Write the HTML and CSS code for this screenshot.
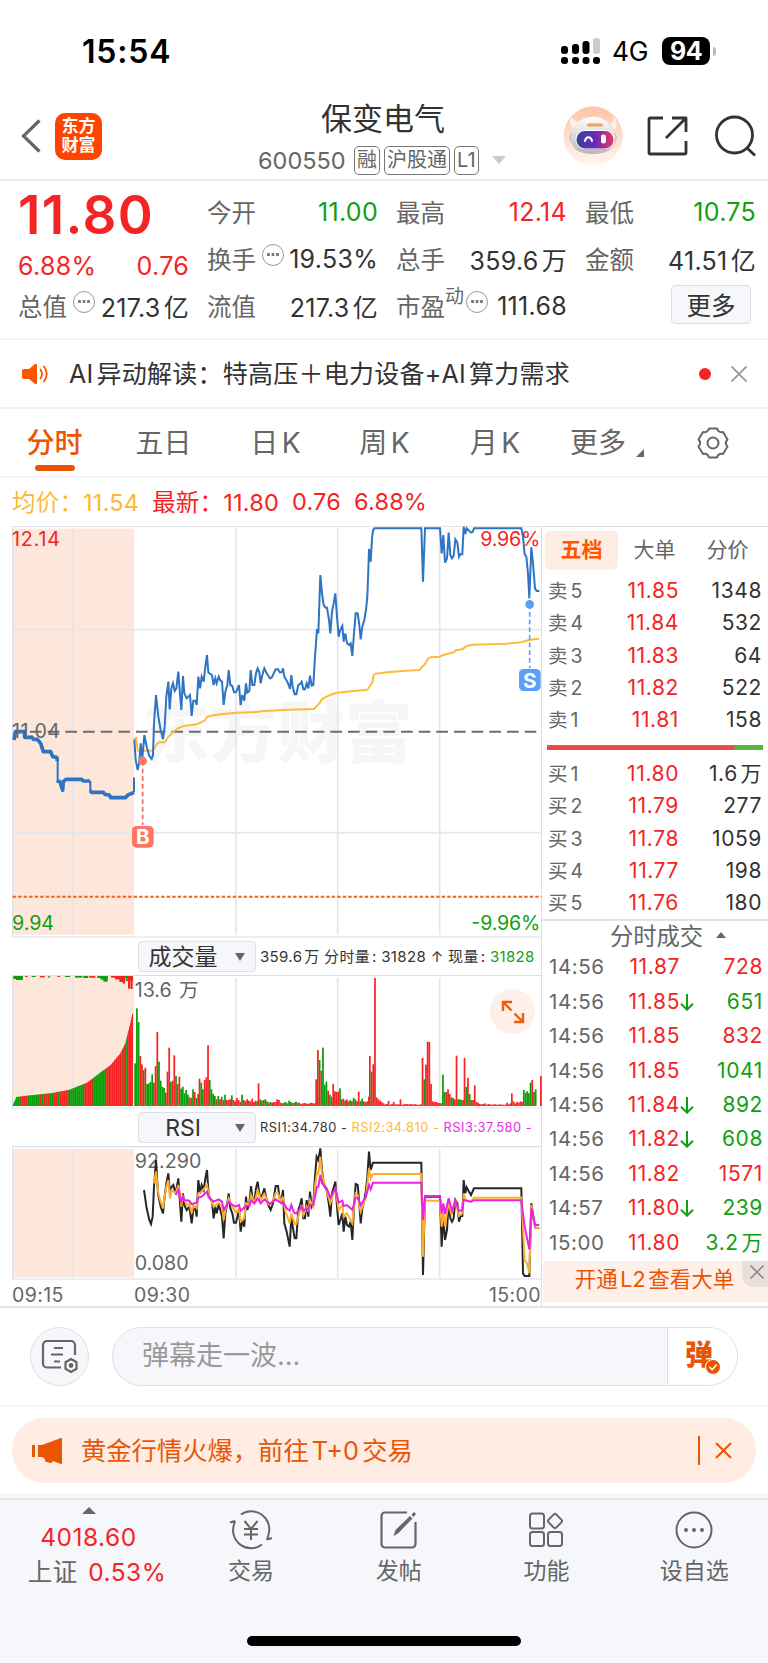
FILE: index.html
```html
<!DOCTYPE html>
<html lang="zh-CN">
  <head>
    <meta charset="UTF-8" />
    <title>保变电气 600550</title>
    <link rel="stylesheet" href="styles.css">
  </head>
  <body>
    <div class="status-bar">
      <span class="clock">15:54</span>
      <div class="status-icons">
        <svg class="signal" width="40" height="28" viewBox="0 0 40 28">
          <g fill="#000">
            <rect x="0" y="9" width="7" height="8" rx="3" />
            <rect x="11" y="7" width="7" height="10" rx="3" />
            <rect x="21.500" y="4" width="7" height="13" rx="3" />
            <rect x="0" y="20" width="7" height="7" rx="3" />
            <rect x="11" y="20" width="7" height="7" rx="3" />
            <rect x="21.500" y="20" width="7" height="7" rx="3" />
            <rect x="32" y="20" width="7" height="7" rx="3" />
          </g>
          <rect x="32" y="1" width="7" height="16" rx="3" fill="#ccc" />
        </svg>
        <span class="network">4G</span>
        <span class="battery">94</span>
        <span class="battery-cap"></span>
      </div>
    </div>

    <div class="header">
      <div class="header-left">
        <svg width="20" height="34" viewBox="0 0 20 34" fill="none" stroke="#666" stroke-width="3.200">
          <path d="M18.500 1.500 2.500 17l16 15.500" />
        </svg>
        <div class="logo">东方<br />财富</div>
      </div>
      <div class="header-title">
        <div class="name">保变电气</div>
        <div class="code-row">
          <span class="code">600550</span>
          <span class="tag">融</span>
          <span class="tag">沪股通</span>
          <span class="tag">L1</span>
          <span class="arrow-down"></span>
        </div>
      </div>
      <div class="header-right">
        <svg class="robot" width="60" height="60" viewBox="0 0 60 60">
          <defs>
            <linearGradient id="halo" x1="0" y1="0" x2="0" y2="1">
              <stop offset="0" stop-color="#ffc4a8" />
              <stop offset="1" stop-color="#fff6f1" />
            </linearGradient>
            <linearGradient id="visor" x1="0" y1="0" x2="1" y2="0">
              <stop offset="0" stop-color="#34429c" />
              <stop offset="0.500" stop-color="#6a2bb4" />
              <stop offset="1" stop-color="#e8385f" />
            </linearGradient>
            <linearGradient id="shell" x1="0" y1="0" x2="0" y2="1">
              <stop offset="0" stop-color="#fff" />
              <stop offset="1" stop-color="#bdb5b8" />
            </linearGradient>
          </defs>
          <circle cx="30" cy="30" r="29.500" fill="url(#halo)" />
          <path d="M10 22c-4-4-4-8-1-11 1 3 3 4 7 5zM47 17c4-1 4-4 3-7 4 4 5 9 2 14z" fill="#fbf3f1" />
          <rect x="6" y="25" width="48" height="14" rx="7" fill="#cfc7ca" />
          <path d="M30 11c13 0 20 8 22 20 1 12-9 17-22 17S7 43 8 31c2-12 9-20 22-20z" fill="url(#shell)" />
          <rect x="24" y="17.500" width="16" height="3" rx="1.500" fill="#f0a060" />
          <rect x="12.500" y="24" width="39" height="19" rx="9" fill="#fff" />
          <rect x="13.500" y="25" width="37" height="17.500" rx="8.500" fill="url(#visor)" />
          <path d="M22 35c1-5 6-5 7 0" fill="none" stroke="#fff" stroke-width="2" stroke-linecap="round" />
          <rect x="38" y="28.500" width="5" height="9" rx="2.200" fill="#fff" />
        </svg>
        <svg class="share" width="42" height="42" viewBox="0 0 42 42" fill="none" stroke="#333" stroke-width="2.800" stroke-linejoin="round">
          <path d="M16 3H3.500a1.500 1.500 0 0 0-1.500 1.500v33A1.500 1.500 0 0 0 3.500 39h34a1.500 1.500 0 0 0 1.500-1.500V26M25 3h14v14M39 3 19 23" />
        </svg>
        <svg class="search" width="42" height="42" viewBox="0 0 42 42" fill="none" stroke="#333" stroke-width="2.800">
          <circle cx="19.500" cy="20" r="18" />
          <path d="M32 33l8 7.500" />
        </svg>
      </div>
    </div>

    <div class="quote">
      <div class="quote-col first">
        <div class="price">11.80</div>
        <div class="cell change red"><span>6.88%</span><span>0.76</span></div>
        <div class="cell"><label>总值<i class="tip"></i></label><span>217.3亿</span></div>
      </div>
      <div class="quote-col">
        <div class="cell"><label>今开</label><span class="green">11.00</span></div>
        <div class="cell"><label>换手<i class="tip"></i></label><span>19.53%</span></div>
        <div class="cell"><label>流值</label><span>217.3亿</span></div>
      </div>
      <div class="quote-col">
        <div class="cell"><label>最高</label><span class="red">12.14</span></div>
        <div class="cell"><label>总手</label><span>359.6万</span></div>
        <div class="cell"><label>市盈<sup>动</sup><i class="tip pe"></i></label><span>111.68</span></div>
      </div>
      <div class="quote-col">
        <div class="cell"><label>最低</label><span class="green">10.75</span></div>
        <div class="cell"><label>金额</label><span>41.51亿</span></div>
        <div class="cell end"><button class="more">更多</button></div>
      </div>
    </div>

    <div class="ai-bar">
      <svg width="27" height="22" viewBox="0 0 27 22">
        <path d="M2 6h5l6-5q2-1 2 1v18q0 2-2 1l-6-5H2q-2 0-2-2V8q0-2 2-2z" fill="#ff5500" />
        <path d="M18.500 6.500q3 4.500 0 9M22 3.500q5.500 7.500 0 15" fill="none" stroke="#ff5500" stroke-width="1.800" stroke-linecap="round" />
      </svg>
      <span class="ai-text">AI异动解读：特高压＋电力设备+AI算力需求</span>
      <span class="dot"></span>
      <svg width="16" height="16" viewBox="0 0 16 16" stroke="#999" stroke-width="1.800"><path d="M.5.500l15 15M15.500.500l-15 15" /></svg>
    </div>

    <div class="tabs">
      <span class="tab active">分时</span>
      <span class="tab">五日</span>
      <span class="tab">日K</span>
      <span class="tab">周K</span>
      <span class="tab">月K</span>
      <span class="tab tab-more">更多<i class="corner"></i></span>
      <svg class="gear" width="32" height="32" viewBox="0 0 32 32" fill="none" stroke="#666" stroke-width="2">
        <path d="M12 1.500h8q1.500 4.500 6 3.500l4.500 7.500q-3.500 3.500 0 7L26 27q-4.500-1-6 3.500h-8Q10.500 26 6 27l-4.500-7.500q3.500-3.500 0-7L6 5q4.500 1 6-3.500z" stroke-linejoin="round" />
        <circle cx="16" cy="16" r="5.500" />
      </svg>
    </div>

    <div class="legend">
      <span class="avg">均价：<b>11.54</b></span>
      <span class="red">最新：<b>11.80</b></span>
      <span class="red">0.76</span>
      <span class="red">6.88%</span>
    </div>

    <div class="market">
      <div class="charts">
        <svg class="main-chart" viewBox="36 48 1590 1236" width="530" height="412">
          <rect x="38" y="56" width="364" height="1218" fill="#fde6da" />
          <text class="watermark" x="428" y="741" textLength="808">东方财富</text>
          <g stroke="#e4e6ec" stroke-width="5">
            <path d="M219 55V1274M708 55V1274M1013 55V1274M1319 55V1274M38 359H1624M38 968H1624" />
          </g>
          <path d="M36 49H1626M36 1281H1626M37.500 48V1284M1624.500 48V1284" stroke="#dcdee5" stroke-width="3" />
          <path d="M90 665H1616" stroke="#6c6c6c" stroke-width="6" stroke-dasharray="35 18" />
          <path d="M38 1160H1624" stroke="#f0641e" stroke-width="6" stroke-dasharray="10.500 6" />
          <g fill="none" stroke="#fdbb3d" stroke-width="6" stroke-linejoin="round">
            <polyline points="403,688 408,683 413,722 457,722 465,712 472,700 478,697 494,697 503,683 512,674 520,665 535,654 555,647 590,643 605,636 615,630 622,620 640,616 670,612 710,608 770,606 790,603 870,599" />
            <polyline transform="translate(840 0)" points="30,599 102,597 118,580 126,568 135,562 158,552 172,548 200,545 262,539 270,528 277,518 281,495 286,491 320,487 380,482 419,480 425,472 433,465 445,445 452,442 480,440 487,436 522,427 527,421 547,418 560,408 580,404 680,401 724,397 745,391 765,387 778,386" />
          </g>
          <g fill="none" stroke="#2f74c4" stroke-width="6">
            <polyline points="403,688 407,750 413,780 418,755 422,700 427,745 433,675 440,710 448,738 455,747 459,735 462,640 468,555 475,620 482,660 489,688 494,650 499,560 505,515 509,598 514,535 519,520 524,543 529,535 535,485 539,540 544,600 549,498 553,550 560,565 565,560 570,555 575,618 580,572 586,572 590,585 595,500 600,535 605,500 611,515 616,470 621,435 625,487 631,492 636,495 641,525 646,505 650,520 656,500 661,512 666,515 671,585 676,545 682,525 686,480 691,525 697,528 702,547 708,547 713,535 717,525 722,585 727,555 733,572 738,520 742,548 748,543 752,480 757,525 763,525 768,490 773,475 778,487 782,520 787,495 793,475 800,490 810,505 815,503 827,478 834,478 839,487 845,487 849,475" />
            <polyline transform="translate(840 0)" points="9,475 13,500 20,512 24,520 30,537 34,495 38,530 44,553 49,553 55,525 60,522 65,515 70,538 75,538 80,520 85,535 90,497 95,527 100,525 105,440 111,357 115,370 121,195 126,250 131,285 137,293 141,293 147,330 151,370 156,305 161,280 166,250 171,320 176,380 181,360 187,348 191,395 196,370 201,400 207,405 212,400 217,438 222,370 227,310 233,310 238,345 242,388 247,350 253,330 258,300 262,260 265,180 267,117 272,155 276,85 279,62 283,55 424,55 429,215 435,55 480,55 485,130 490,75 495,158 501,145 506,68 511,135 516,145 521,138 526,88 532,98 537,140 541,133 547,133 551,50 556,72 560,55 567,62 573,67 578,66 582,55 724,55 729,80 734,133 739,140 744,190 748,265 754,112 759,160 765,235 770,243 778,243" />
            <path d="M173 742V815M271 813V845M402 847V806" />
            <path d="M42 690 46 665H74V682H96L100 688H112L122 700 130 725H152L158 740 170 742 172 753M170 813 180 815 188 841 190 815 198 808H245L250 813H270M270 842 275 847H310L315 853 328 855 332 863H376L384 855 402 847M399 808h6" stroke-width="11" stroke-linejoin="round" />
          </g>
          <g class="point buy">
            <path d="M428 753V945" />
            <circle cx="428" cy="753" r="13" />
            <rect x="396" y="948" width="65" height="65" rx="14" />
            <text x="428.500" y="1003">B</text>
          </g>
          <g class="point sell">
            <path d="M1589 283V475" />
            <circle cx="1589" cy="283" r="13" />
            <rect x="1557" y="477" width="65" height="66" rx="14" />
            <text x="1589.500" y="533">S</text>
          </g>
          <g class="scale">
            <text x="36" y="108" fill="#f52424" textLength="144">12.14</text>
            <text x="36" y="685" fill="#666" textLength="144">11.04</text>
            <text x="36" y="1259" fill="#11a011" textLength="126">9.94</text>
            <text x="1441" y="108" fill="#f52424" textLength="180">9.96%</text>
            <text x="1414" y="1259" fill="#11a011" textLength="207">-9.96%</text>
          </g>
        </svg>

        <div class="indicator">
          <div class="picker">成交量<i></i></div>
          <span class="info">359.6万 分时量: 31828 ↑ 现量: <em class="green">31828</em></span>
        </div>
        <div class="volume-wrap">
          <svg viewBox="36 135 1590 402" width="530" height="134">
            <rect x="38" y="138" width="364" height="390" fill="#fde6da" />
            <path d="M219 143V528M708 143V528M1013 143V528M1319 143V528" stroke="#e4e6ec" stroke-width="5" />
            <path d="M36 136.500H1626M36 534H1626M37.500 135V537M1624.500 135V537" stroke="#dcdee5" stroke-width="3" />
            <g id="volume"></g>
            <g class="scale"><text x="404" y="201" fill="#666">13.6万</text></g>
          </svg>
          <div class="expand">
            <svg width="24" height="24" viewBox="0 0 24 24" fill="none" stroke="#ea6010" stroke-width="2.400">
              <path d="M11 2H2v9M2 2l8.500 8.500M22 13v9h-9M22 22l-8.500-8.500" />
            </svg>
          </div>
        </div>

        <div class="indicator">
          <div class="picker">RSI<i></i></div>
          <span class="info rsi">RSI1:34.780 - <em class="avg">RSI2:34.810 - </em><em class="magenta">RSI3:37.580 -</em></span>
        </div>
        <svg class="rsi-chart" viewBox="36 648 1590 402" width="530" height="134">
          <rect x="38" y="657" width="364" height="385" fill="#fde6da" />
          <path d="M219 657V1042M708 657V1042M1013 657V1042M1319 657V1042" stroke="#e4e6ec" stroke-width="5" />
          <path d="M36 650H1626M36 1047H1626M37.500 648V1050M1624.500 648V1050" stroke="#dcdee5" stroke-width="3.500" />
          <g class="scale">
            <text x="404" y="713" fill="#666" textLength="200">92.290</text>
            <text x="404" y="1021" fill="#666" textLength="162">0.080</text>
          </g>
          <g fill="none" stroke="#262626" stroke-width="6">
            <polyline points="432,780 440,835 448,870 453,882 458,860 462,770 468,690 474,790 482,830 489,850 494,800 499,760 505,730 510,790 515,770 520,765 527,790 535,745 540,820 544,875 549,790 553,825 560,840 568,830 575,880 580,838 586,835 590,860 595,750 600,790 605,765 611,780 616,745 621,720 626,795 632,808 636,815 641,865 646,830 650,850 656,825 661,840 666,860 671,925 676,850 682,820 686,790 691,835 697,850 702,878 708,878 717,840 722,905 727,870 733,890 738,800 742,840 748,820 753,768 758,810 763,815 768,775 773,755 778,790 782,810 793,775 798,800 806,828 812,840 819,820 827,768 834,768 839,805 845,810 849,780" />
            <polyline transform="translate(840 0)" points="9,780 13,880 20,905 29,950 34,860 39,895 44,925 49,925 55,840 60,825 65,805 70,865 75,865 80,810 85,860 90,785 95,830 100,820 105,740 110,680 115,690 121,655 126,720 131,765 137,775 141,785 147,825 151,860 156,790 166,755 171,830 176,885 181,870 187,850 191,905 196,860 201,885 207,890 212,875 217,930 222,830 227,762 233,765 238,820 242,880 247,835 253,810 258,780 262,740 267,665 272,720 279,698 424,698 429,1035 435,800 480,800 485,950 490,860 495,930 501,900 506,815 511,865 516,875 521,865 526,810 532,820 537,875 541,860 547,858 551,750 556,790 560,772 567,785 573,795 582,775 724,775 729,1030 734,1038 748,1038 754,820 760,860 766,893 778,895" />
          </g>
          <g fill="none" stroke="#fbae2c" stroke-width="6">
            <polyline points="462,760 468,725 475,790 482,815 489,835 494,800 499,770 505,750 510,805 515,780 527,790 535,765 541,800 544,830 549,800 560,825 568,820 575,850 580,825 590,835 595,790 605,785 621,765 626,795 641,830 656,818 666,830 671,870 676,840 686,805 697,830 708,848 717,835 722,875 733,865 738,820 748,825 753,795 763,820 773,780 782,810 793,792 806,822 819,815 827,790 834,790 842,815 849,800" />
            <polyline transform="translate(840 0)" points="9,800 15,840 29,880 34,850 44,882 49,882 60,840 65,825 70,855 80,830 85,845 90,810 100,830 105,770 111,725 115,730 121,680 126,735 135,765 151,820 166,775 176,840 187,825 191,860 201,850 217,880 222,830 227,790 233,795 242,845 258,800 267,715 272,745 279,732 424,732 429,980 435,812 480,812 485,890 490,840 495,890 506,815 514,855 526,810 537,858 547,850 551,790 556,810 573,815 582,803 724,803 734,990 741,1000 748,1030 754,825 760,870 767,893 778,895" />
          </g>
          <g fill="none" stroke="#ea22e4" stroke-width="6">
            <polyline points="527,795 535,780 540,800 544,815 549,800 553,810 568,812 575,822 590,818 595,803 605,800 621,785 626,802 641,815 656,808 666,815 671,840 686,815 697,825 708,830 717,825 722,842 738,828 748,828 753,812 763,820 773,805 782,820 793,808 810,822 827,808 845,820 849,815" />
            <polyline transform="translate(840 0)" points="9,815 20,835 29,842 34,825 39,840 44,850 49,850 65,830 70,842 80,835 85,840 90,825 100,825 111,770 115,770 121,735 126,760 140,775 151,803 166,775 176,818 187,812 191,828 201,825 217,840 227,803 233,803 242,825 258,800 267,765 272,778 279,758 424,758 429,870 435,798 480,798 485,850 490,820 495,852 506,805 516,843 526,812 537,843 547,840 551,810 573,815 582,811 724,811 734,890 748,958 754,835 765,885 778,885" />
          </g>
        </svg>
        <div class="times">
          <span class="open">09:15</span><span>09:30</span><span class="close">15:00</span>
        </div>
      </div>

      <div class="side">
        <div class="side-tabs">
          <span class="on">五档</span><span>大单</span><span>分价</span>
        </div>
        <div class="level"><span>卖5</span><span class="red">11.85</span><span>1348</span></div>
        <div class="level"><span>卖4</span><span class="red">11.84</span><span>532</span></div>
        <div class="level"><span>卖3</span><span class="red">11.83</span><span>64</span></div>
        <div class="level"><span>卖2</span><span class="red">11.82</span><span>522</span></div>
        <div class="level"><span>卖1</span><span class="red">11.81</span><span>158</span></div>
        <div class="ratio"><i></i></div>
        <div class="level"><span>买1</span><span class="red">11.80</span><span>1.6万</span></div>
        <div class="level"><span>买2</span><span class="red">11.79</span><span>277</span></div>
        <div class="level"><span>买3</span><span class="red">11.78</span><span>1059</span></div>
        <div class="level"><span>买4</span><span class="red">11.77</span><span>198</span></div>
        <div class="level"><span>买5</span><span class="red">11.76</span><span>180</span></div>
        <div class="deal-title">分时成交<i></i></div>
        <div id="deals"></div>
        <div class="l2">开通L2查看大单
          <div class="l2-close">
            <svg width="14" height="14" viewBox="0 0 14 14" stroke="#8d8583" stroke-width="1.500"><path d="M.5.500l13 13M13.500.500l-13 13" /></svg>
          </div>
        </div>
      </div>
    </div>

    <div class="chat">
      <div class="chat-set">
        <svg width="38" height="36" viewBox="0 0 38 36" fill="none" stroke="#666" stroke-width="2.200">
          <path d="M20 28.500H6a4 4 0 0 1-4-4V6a4 4 0 0 1 4-4h24a4 4 0 0 1 4 4v10M13 9h9M10 15.500h12M13 22.500h6" />
          <path d="M30 20l5.500 3.200v6.600L30 33l-5.500-3.200v-6.600z" />
          <circle cx="30" cy="26.500" r="1.300" fill="#666" />
        </svg>
      </div>
      <div class="chat-input">
        <span>弹幕走一波...</span>
        <div class="danmu">弹
          <svg width="16" height="16" viewBox="0 0 16 16"><circle cx="8" cy="8" r="7.500" fill="#ea5504" stroke="#fff" /><path d="M4.500 8l2.700 2.700L11.700 5.500" fill="none" stroke="#fff" stroke-width="1.600" /></svg>
        </div>
      </div>
    </div>

    <div class="promo-wrap">
      <div class="promo">
        <svg width="31" height="28" viewBox="0 0 31 28" fill="#ea5504">
          <path d="M0 8h3v12H0zM6 8h4L29 1q1-.5 1 .5v25q0 1-1 .5l-8-3q-1 3-4 1.500l-4-1v-2.500L10 20H6z" />
        </svg>
        <span>黄金行情火爆，前往T+0交易</span>
        <i class="sep"></i>
        <svg width="17" height="17" viewBox="0 0 17 17" stroke="#ea5504" stroke-width="2"><path d="M1 1l15 15M16 1 1 16" /></svg>
      </div>
    </div>

    <div class="nav">
      <div class="nav-index">
        <i class="arrow-up"></i>
        <span class="red">4018.60</span>
        <span class="index-name">上证 <em class="red">0.53%</em></span>
      </div>
      <div class="nav-item">
        <svg width="44" height="40" viewBox="0 0 44 40" fill="none" stroke="#666" stroke-width="2">
          <path d="M12 4.500A18 18 0 0 1 39.500 24.500L38 30M33 34.500A18 18 0 0 1 5 14.500L6 11M1 12.500l5-1.500M38 29.500l5-1.500M15.500 11l6.500 8 6.500-8M15 19h14M15 24.500h14M22 19v11" />
        </svg>
        <span>交易</span>
      </div>
      <div class="nav-item">
        <svg width="44" height="40" viewBox="0 0 44 40" fill="none" stroke="#666" stroke-width="2.200">
          <path d="M30 2.500H8a3.500 3.500 0 0 0-3.500 3.500v28A3.500 3.500 0 0 0 8 37.500h27a3.500 3.500 0 0 0 3.500-3.500V12" />
          <path d="M16.500 26l2-6L33 6l2.500 2.500L21 23.500zM34.500 4.500l2.500-2.500 2 2-2.500 3z" fill="#666" stroke="none" />
        </svg>
        <span>发帖</span>
      </div>
      <div class="nav-item">
        <svg width="44" height="40" viewBox="0 0 44 40" fill="none" stroke="#666" stroke-width="2">
          <rect x="6" y="3.500" width="14" height="15" rx="2.500" />
          <rect x="6" y="22" width="14" height="14" rx="2.500" />
          <rect x="24" y="22" width="14" height="14" rx="2.500" />
          <rect x="25.500" y="5.500" width="11" height="11" rx="2" transform="rotate(45 31 11)" />
        </svg>
        <span>功能</span>
      </div>
      <div class="nav-item">
        <svg width="44" height="40" viewBox="0 0 44 40">
          <circle cx="22" cy="20" r="17.500" fill="none" stroke="#666" stroke-width="2" />
          <g fill="#666"><circle cx="14" cy="20" r="2" /><circle cx="22" cy="20" r="2" /><circle cx="30" cy="20" r="2" /></g>
        </svg>
        <span>设自选</span>
      </div>
      <div class="home-bar"></div>
    </div>

    <script src="script.js"></script>
  </body>
</html>
```
FILE: styles.css
```css
* {
  box-sizing: border-box;
}
body {
  margin: 0;
  width: 768px;
  background-color: #fff;
  color: #333;
  font-family: Inter, "Noto Sans CJK SC", sans-serif;
  text-autospace: normal;
}
svg {
  display: block;
  flex-shrink: 0;
}
i,
em {
  font-style: normal;
}
.red {
  color: #f52424;
}
.green {
  color: #11a011;
}
.avg {
  color: #fdb933;
}
.magenta {
  color: #e62de6;
}

/* status bar */
.status-bar {
  display: flex;
  justify-content: space-between;
  align-items: center;
  height: 102px;
  padding: 0 52px 0 82px;
}
.clock {
  font-size: 32px;
  font-weight: 600;
  letter-spacing: 0.8px;
  color: #000;
}
.status-icons {
  display: flex;
  align-items: center;
}
.network {
  width: 50px;
  margin-left: 11px;
  font-size: 26.500px;
  letter-spacing: -0.3px;
  color: #000;
}
.battery {
  width: 48px;
  height: 28px;
  border-radius: 8px;
  background-color: #000;
  color: #fff;
  font-size: 25px;
  font-weight: 700;
  line-height: 28px;
  text-align: center;
  letter-spacing: -0.5px;
}
.battery-cap {
  width: 3px;
  height: 9px;
  margin-left: 3px;
  border-radius: 0 4px 4px 0;
  background-color: #bbb;
}

/* header */
.header {
  display: grid;
  grid-template-columns: 258px 1fr 210px;
  height: 79px;
  border-bottom: 2px solid #e8e8e8;
}
.header-left {
  display: flex;
  align-items: center;
  gap: 14px;
  height: 68px;
  padding-left: 21px;
}
.logo {
  width: 47px;
  height: 47px;
  padding-top: 4px;
  border-radius: 10px;
  background-color: #ff4400;
  color: #fff;
  font-size: 17px;
  font-weight: 700;
  line-height: 19px;
  text-align: center;
}
.name {
  height: 38px;
  padding-left: 63px;
  font-size: 31px;
  line-height: 34px;
}
.code-row {
  display: flex;
  align-items: center;
  height: 40px;
}
.code {
  width: 96px;
  font-size: 23.5px;
  color: #666;
}
.tag {
  height: 29px;
  margin-right: 4px;
  padding: 0 2px;
  border: 1.500px solid #777;
  border-radius: 5px;
  font-size: 20px;
  line-height: 26px;
  color: #666;
}
.arrow-down {
  margin-left: 9px;
  border: 7px solid transparent;
  border-top: 8px solid #ccc;
  border-bottom: 0;
}
.header-right {
  display: flex;
  align-items: center;
  height: 68px;
  padding-left: 5px;
}
.share {
  margin-left: 24px;
}
.search {
  margin-left: 26px;
}

/* quote */
.quote {
  display: grid;
  grid-template-columns: repeat(4, 170px);
  column-gap: 19px;
  height: 159px;
  padding: 7px 0 0 18px;
  border-bottom: 2px solid #f3f3f5;
}
.cell {
  display: flex;
  justify-content: space-between;
  align-items: center;
  height: 47px;
  font-size: 25px;
  white-space: nowrap;
}
.cell span {
  margin-right: -1px;
  letter-spacing: 0.3px;
}
.cell label {
  display: flex;
  align-items: center;
  font-size: 24.5px;
  color: #666;
}
.cell.end {
  justify-content: flex-end;
  padding-right: 4px;
}
.price {
  height: 56px;
  font-size: 53px;
  font-weight: 600;
  line-height: 55px;
  letter-spacing: 1.4px;
  color: #f52424;
}
.cell.change {
  height: 38px;
  padding-top: 5px;
}
.tip {
  position: relative;
  top: -4px;
  width: 22px;
  height: 22px;
  margin-left: 6px;
  border: 1.500px solid #999;
  border-radius: 50%;
  background: radial-gradient(circle, #777 1.300px, transparent 1.800px) center / 4.500px 4.500px repeat-x content-box;
  padding: 0 3px;
}
.tip.pe {
  margin-left: 2px;
}
.cell sup {
  align-self: flex-start;
  margin-top: -3px;
  font-size: 19px;
  line-height: 24px;
  vertical-align: baseline;
}
.more {
  width: 80px;
  height: 39px;
  margin-top: -2px;
  padding: 0;
  border: 1.500px solid #dddfe6;
  border-radius: 4px;
  background-color: #f6f7fa;
  color: #333;
  font-family: inherit;
  font-size: 24.500px;
}

/* ai bar */
.ai-bar {
  display: flex;
  align-items: center;
  height: 69px;
  padding: 0 21px 0 22px;
  border-bottom: 2px solid #f3f3f5;
}
.ai-text {
  flex: 1;
  margin-left: 20px;
  padding-bottom: 4px;
  font-size: 25px;
  letter-spacing: 0.24px;
}
.dot {
  width: 12px;
  height: 12px;
  margin-right: 20px;
  border-radius: 50%;
  background-color: #f52424;
}

/* tabs */
.tabs {
  display: grid;
  grid-template-columns: 109px 109px 115px 103px 118px 105px 1fr;
  align-items: center;
  height: 69px;
  border-bottom: 2px solid #f3f3f5;
}
.tab {
  position: relative;
  font-size: 28px;
  line-height: 66px;
  text-align: center;
  color: #666;
}
.tab.active {
  color: #ea5504;
  font-weight: 500;
}
.tab.active::after {
  content: "";
  position: absolute;
  left: 35px;
  bottom: 5px;
  width: 40px;
  height: 6px;
  border-radius: 3px;
  background-color: #ea5504;
}
.tab-more {
  text-align: right;
  padding-right: 33px;
}
.corner {
  position: absolute;
  right: 15px;
  bottom: 19px;
  border-left: 8px solid transparent;
  border-bottom: 8px solid #666;
}
.gear {
  margin-left: 38px;
}

.legend {
  display: flex;
  align-items: center;
  gap: 13px;
  height: 48px;
  padding: 0 0 2px 12px;
  font-size: 23.500px;
  letter-spacing: 0.2px;
}
.legend b {
  font-weight: 400;
}

/* charts */
.market {
  display: flex;
  height: 782px;
  border-bottom: 2px solid #e3e3e8;
}
.charts {
  width: 542px;
  padding-left: 12px;
  border-right: 1px solid #dcdee5;
}
.watermark {
  fill: #f6f6f6;
  font-size: 200px;
  font-weight: 900;
}
.scale text {
  font-size: 59px;
}
.point text {
  fill: #fff;
  font-size: 62px;
  font-weight: 700;
  text-anchor: middle;
}
.point path {
  stroke-width: 5;
  stroke-dasharray: 14 9;
}
.buy {
  fill: #ff7563;
  stroke: none;
}
.buy path {
  stroke: #f26a5b;
}
.sell {
  fill: #5c9ffa;
}
.sell path {
  stroke: #5c9ffa;
}
.indicator {
  display: flex;
  align-items: center;
  height: 37px;
  padding-left: 126px;
}
.picker {
  display: flex;
  align-items: center;
  justify-content: center;
  position: relative;
  flex-shrink: 0;
  width: 118px;
  height: 31px;
  padding-right: 28px;
  border: 1px solid #dddfe6;
  border-radius: 4px;
  background-color: #f6f7fa;
  font-size: 23px;
  line-height: 28px;
}
.picker i {
  position: absolute;
  right: 10px;
  top: 11px;
  border: 5px solid transparent;
  border-top: 8px solid #666;
  border-bottom: 0;
}
.info {
  margin-left: 4px;
  padding-bottom: 2px;
  font-size: 15px;
  white-space: pre;
  letter-spacing: 0.35px;
}
.info.rsi {
  padding-bottom: 0;
  font-size: 12.800px;
  letter-spacing: 0.52px;
}
.volume-wrap {
  position: relative;
}
.expand {
  position: absolute;
  right: 6px;
  top: 14px;
  display: flex;
  align-items: center;
  justify-content: center;
  width: 45px;
  height: 45px;
  border-radius: 50%;
  background-color: #fef0e9;
}
.times {
  display: flex;
  height: 27px;
  font-size: 19.500px;
  line-height: 30px;
  letter-spacing: 0.4px;
  color: #666;
}
.times .open {
  width: 122px;
}
.times .close {
  margin-left: auto;
}

/* order book */
.side {
  width: 226px;
  border-top: 1px solid #dcdee5;
  font-size: 21px;
}
.side-tabs {
  display: flex;
  height: 48px;
  padding: 4px 0 0 3px;
  color: #666;
}
.side-tabs span {
  width: 73px;
  height: 39px;
  border-radius: 5px;
  line-height: 38px;
  text-align: center;
}
.side-tabs .on {
  background-color: #ffece3;
  color: #ff5500;
  font-weight: 700;
}
.level {
  display: grid;
  grid-template-columns: 60px 71px 83px;
  height: 32.300px;
  padding-left: 6px;
  line-height: 32px;
  letter-spacing: 0.6px;
}
.level span {
  text-align: right;
}
.level span:first-child {
  text-align: left;
  font-size: 19.500px;
  color: #666;
}
.ratio {
  width: 216px;
  height: 5px;
  margin: 9px 0 7.500px 5px;
  background-color: #55b63c;
}
.ratio i {
  display: block;
  width: 189px;
  height: 5px;
  background-color: #ee4748;
  clip-path: polygon(0 0, 100% 0, 98% 100%, 0 100%);
}
.deal-title {
  display: flex;
  align-items: center;
  justify-content: center;
  height: 31px;
  border-top: 2px solid #e3e4ea;
  padding: 0 16px 2px 42px;
  font-size: 23.300px;
  color: #666;
}
.deal-title i {
  margin-left: 13px;
  border: 5.500px solid transparent;
  border-bottom: 6px solid #666;
  border-top: 0;
}
.deal {
  display: grid;
  grid-template-columns: 62px 69px 14px 69px;
  height: 34.400px;
  padding-left: 7px;
  line-height: 34px;
  letter-spacing: 0.6px;
}
.deal span {
  text-align: right;
}
.deal .time {
  text-align: left;
  font-size: 20.500px;
  color: #666;
}
.deal svg {
  margin: 9px 0 0 0;
}
.l2 {
  position: relative;
  height: 41px;
  margin: 1px 0 0 1px;
  padding-right: 2px;
  background-color: #feefe9;
  color: #ea5504;
  font-size: 21.500px;
  line-height: 37px;
  text-align: center;
}
.l2-close {
  position: absolute;
  right: 0;
  top: 0;
  width: 26px;
  height: 26px;
  padding: 4px 0 0 8px;
  border-bottom-left-radius: 12px;
  background-color: #e9dfdb;
}

/* chat */
.chat {
  display: flex;
  align-items: center;
  gap: 23px;
  height: 99px;
  padding-left: 30px;
  border-bottom: 2px solid #f5f5f7;
}
.chat-set {
  display: flex;
  align-items: center;
  justify-content: center;
  width: 59px;
  height: 59px;
  border: 1.500px solid #dedfe5;
  border-radius: 50%;
  background-color: #f6f7fa;
}
.chat-input {
  display: flex;
  width: 626px;
  height: 59px;
  border: 1.500px solid #dedfe5;
  border-radius: 30px;
  background-color: #f6f7fa;
  overflow: hidden;
  font-size: 27px;
  line-height: 55px;
  color: #999;
  text-autospace: no-autospace;
}
.chat-input span {
  flex: 1;
  padding-left: 29px;
}
.danmu {
  position: relative;
  width: 70px;
  padding-left: 17px;
  border-left: 1.500px solid #dedfe5;
  background-color: #fff;
  color: #ea5504;
  font-size: 28px;
  font-weight: 900;
  line-height: 54px;
}
.danmu svg {
  position: absolute;
  left: 37px;
  top: 31px;
}

/* promo */
.promo-wrap {
  height: 91px;
  padding: 11px 12px;
  border-bottom: 5px solid #f6f7fa;
}
.promo {
  display: flex;
  align-items: center;
  height: 65px;
  padding: 0 24px 0 20px;
  border-radius: 32px;
  background-color: #ffede4;
  color: #ea5504;
  font-size: 25.300px;
}
.promo span {
  flex: 1;
  padding: 0 0 4px 18px;
}
.sep {
  width: 2px;
  height: 29px;
  margin-right: 15px;
  background-color: #ea5504;
}

/* bottom nav */
.nav {
  display: grid;
  grid-template-columns: 177px repeat(4, 1fr);
  grid-template-rows: 136px 10px;
  height: 165px;
  border-top: 2px solid #e3e3e5;
  background-color: #f6f7fa;
  color: #666;
}
.nav-index {
  display: flex;
  flex-direction: column;
  align-items: center;
  padding-top: 7px;
  font-size: 24.500px;
  line-height: 35px;
  letter-spacing: 0.5px;
  white-space: pre;
}
.nav-index > .red {
  padding-top: 6px;
}
.index-name {
  margin-left: 17px;
}
.index-name em {
  margin-left: 3px;
}
.arrow-up {
  border: 7px solid transparent;
  border-top: 0;
  border-bottom: 7px solid #666;
}
.nav-item {
  display: flex;
  flex-direction: column;
  align-items: center;
  padding-top: 10px;
  font-size: 23px;
  line-height: 43px;
}
.home-bar {
  grid-column: 1 / -1;
  justify-self: center;
  width: 274px;
  height: 10px;
  border-radius: 5px;
  background-color: #000;
}
```
FILE: script.js
```js
const RED = "#f82222";
const GREEN = "#0a9f0a";
const BASE = 528;
const STEP = 5.1;
const volume = document.querySelector("#volume");

function bar(x, y, w, h, color) {
  const rect = document.createElementNS("http://www.w3.org/2000/svg", "rect");
  rect.setAttribute("x", x);
  rect.setAttribute("y", y);
  rect.setAttribute("width", w);
  rect.setAttribute("height", h);
  rect.setAttribute("fill", color);
  volume.appendChild(rect);
}

// 集合竞价: [x, 高度]
const auction = [[38, 4], [48, 27], [90, 32], [150, 38], [205, 48], [260, 70], [305, 104], [330, 122], [360, 158], [375, 188], [388, 240], [398, 286]];
const runs = "gggggrrrrggggggggrgrrgrgggrrgrrrrrrggggggggggrrrrrggggggggrgrrrrrrrrrgrgrrrr";
for (let k = 0; k < auction.length - 1; k++) {
  const [x1, h1] = auction[k];
  const [x2, h2] = auction[k + 1];
  for (let x = x1; x < x2; x += 2) {
    const h = h1 + ((h2 - h1) * (x - x1)) / (x2 - x1);
    const c = runs[Math.floor(((x - 38) / 362) * runs.length)];
    bar(x, BASE - h, 3, h, c === "g" ? GREEN : RED);
  }
}

// 未匹配量, 自上而下
[
  [40, 28, 9, "g"], [48, 20, 12, "g"], [75, 8, 3, "r"], [95, 12, 3, "g"], [120, 14, 4, "r"], [145, 5, 5, "g"], [172, 8, 3, "r"],
  [195, 15, 3, "g"], [225, 22, 5, "g"], [250, 15, 6, "g"], [268, 18, 5, "r"], [292, 30, 6, "g"], [302, 20, 11, "g"],
  [310, 13, 17, "g"], [333, 66, 5, "r"], [345, 30, 10, "r"], [358, 16, 18, "r"], [368, 7, 23, "r"], [377, 6, 16, "g"],
  [383, 16, 14, "r"], [384, 7, 38, "r"], [392, 6, 39, "r"],
].forEach(([x, w, h, c]) => bar(x, 138, w, h, c === "g" ? GREEN : RED));

// 分时量
const minutes = [
  [403, "g128 g293 g252 r150 r125 g108 r115 g66 g68 g72 g95 r70 r120 r222 g133 g76 g58 g54 r40 r103 r175 g72 r76 r152 g90 r66 r88 g52 g58 g38 g48 g34 r26 r24 g50 r42 g24 r36"],
  [596, "r82 g70 g50 r78 r86 r182 g78 g50 g36 g30 r20 g30 r20 g28 r18 g34 r18 r18 r20 g32 r18 r14 r24 r18 r12 g34 r18 g14 r20 r16 r14 r22 r12 r16 g14"],
  [773, "r68 g20 r16 g18 g20 g14 r10 g12 r10 r12 r12 r20 r18 r10 r8 g10 g12 g8 g16 g12 r9 g10 g13 r10 g10 r6 r8 r9 r8 r6 g8 r10 r8 r8"],
  [946, "r80 r168 g138 r106 g175 g64 g73 r46 g34 g28 r66 r44 r42 r43 g53 r20 r22 g16 r20 r14 g18 r14 g24 g20 r14 r43 g15 g22 r14 r12 r14 r28"],
  [1107, "r150 g103 r125 r384 r26 r20 r16 r12 r8 r5 r6 r15 r4 r6 r12 r5 r5 r5 r20 r4 r5 r6 r6 r5 r6 r5 r5 r5 r4 r4 r5"],
  [1265, "r144 g80 r124 r193 r192 r66 r14 r12 r12 r10 r9 r8 g94 g42 r42 r50 r36 g26 g24 r20 r151 g20 g20 g18 r18"],
  [1391, "r144 g57 r84 g36 g18 r18 r62 r12 r10 r6 r5 r6 r8 r4 r6 r5 r4 r5 r5 r4 r4 r5 r4 r4 r4 r10 r5 r8"],
  [1533, "r38 r14 r8 r12 r10 r14 r12 g48 g40 g44 g38 g70 r78 g42 g50"],
  [1620, "r90"],
];
minutes.forEach(([start, list]) => {
  list.split(" ").forEach((item, i) => {
    const h = Number(item.slice(1));
    bar(start + i * STEP, BASE - h, 5.2, h, item[0] === "g" ? GREEN : RED);
  });
});

// 分时成交
const deals = [
  ["14:56", "11.87", "", "728", "red"],
  ["14:56", "11.85", "down", "651", "green"],
  ["14:56", "11.85", "", "832", "red"],
  ["14:56", "11.85", "", "1041", "green"],
  ["14:56", "11.84", "down", "892", "green"],
  ["14:56", "11.82", "down", "608", "green"],
  ["14:56", "11.82", "", "1571", "red"],
  ["14:57", "11.80", "down", "239", "green"],
  ["15:00", "11.80", "", "3.2万", "green"],
];
const arrow = '<svg width="14" height="17" viewBox="0 0 14 17" fill="none" stroke="#11a011" stroke-width="2"><path d="M7 0v15.500M1 9.700l6 6 6-6"/></svg>';
document.querySelector("#deals").innerHTML = deals
  .map(([time, price, dir, num, color]) => `
    <div class="deal">
      <span class="time">${time}</span>
      <span class="red">${price}</span>
      <div>${dir ? arrow : ""}</div>
      <span class="${color}">${num}</span>
    </div>`)
  .join("");
```
